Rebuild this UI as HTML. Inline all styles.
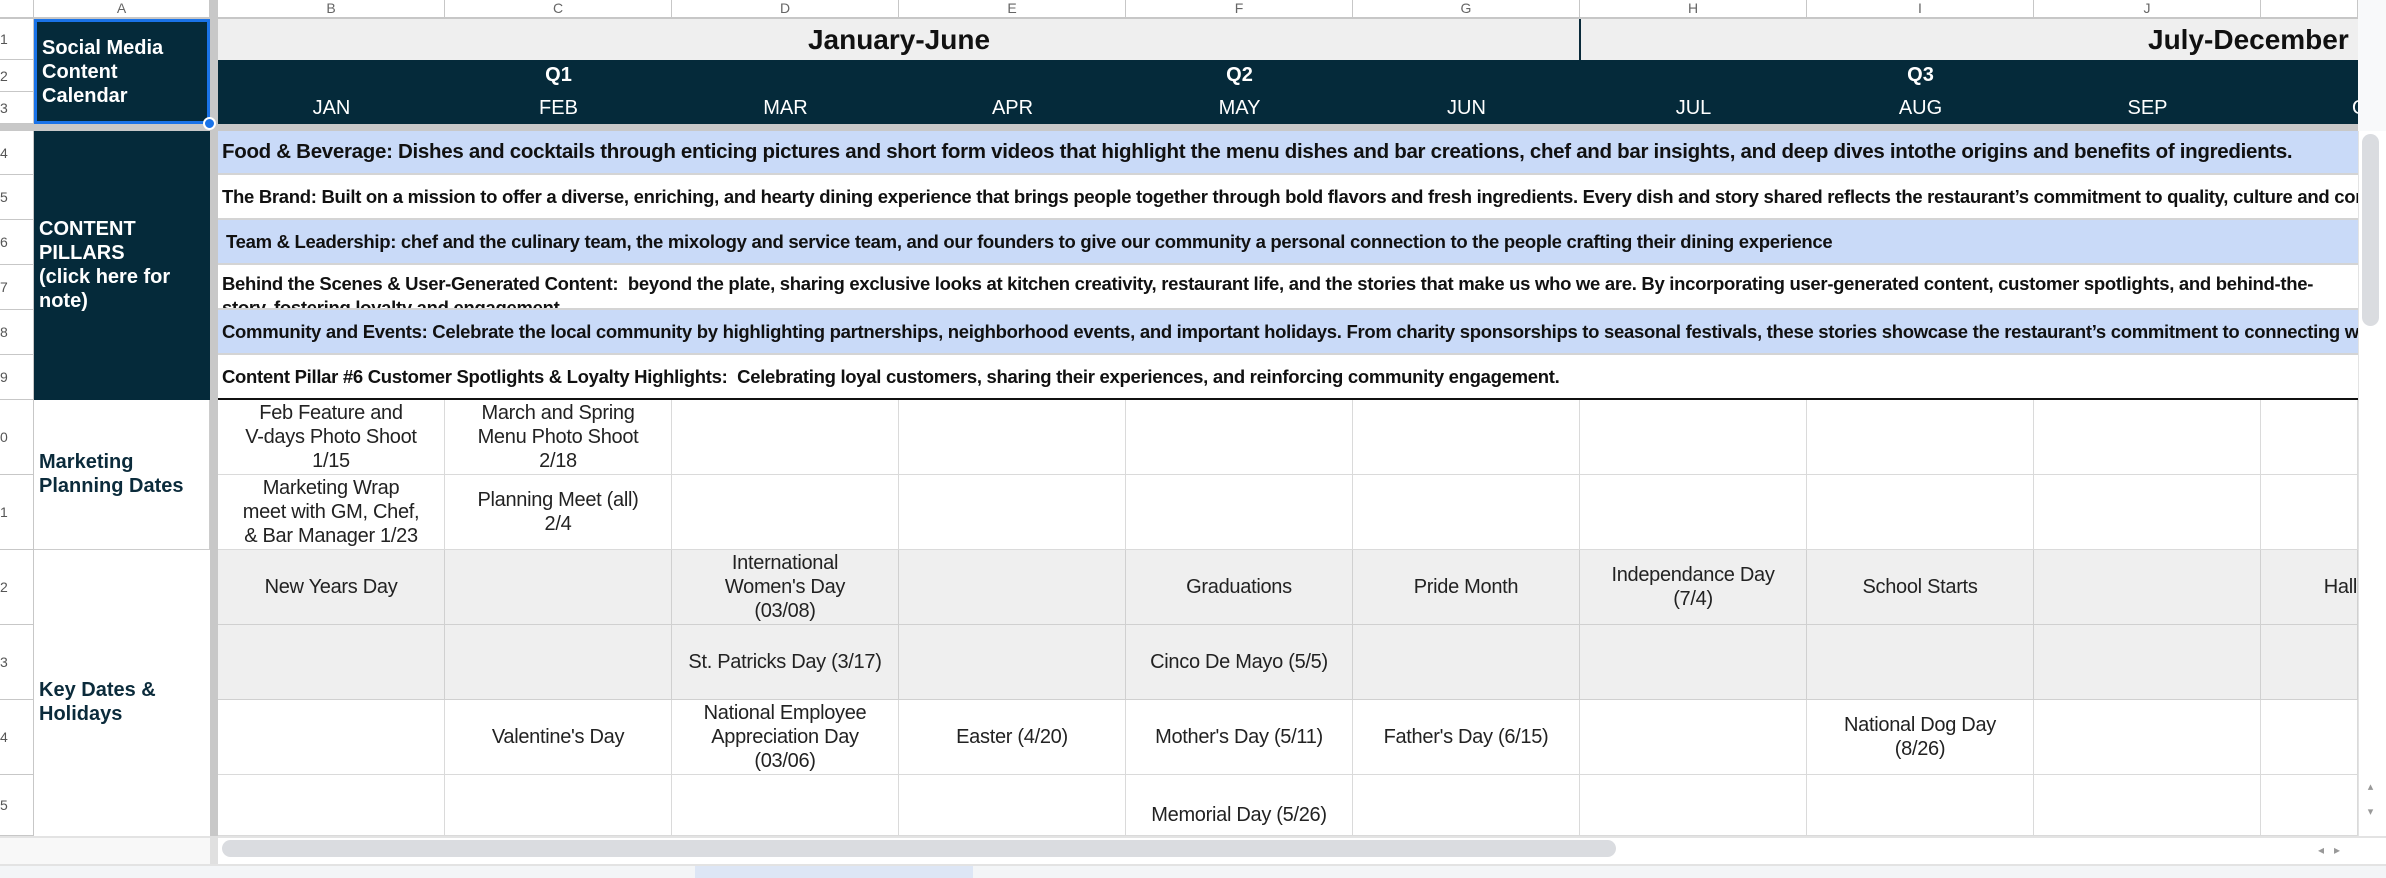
<!DOCTYPE html>
<html><head><meta charset="utf-8"><style>
*{margin:0;padding:0;box-sizing:border-box}
body{width:2386px;height:878px;overflow:hidden;background:#fff;font-family:"Liberation Sans",sans-serif;position:relative;color:#222}
.a{position:absolute}
.hd{position:absolute;top:0;height:19px;border-right:1px solid #c7c7c7;border-bottom:2px solid #c7c7c7;color:#666;font-size:14px;text-align:center;line-height:16px;background:#fff;overflow:hidden}
.rn{position:absolute;left:0;width:34px;border-bottom:1px solid #c7c7c7;border-right:1px solid #c7c7c7;color:#555;font-size:14px;background:#fff;display:flex;align-items:center;padding-left:0}
.c{position:absolute;border-right:1px solid #dadada;border-bottom:1px solid #dadada;display:flex;align-items:center;justify-content:center;text-align:center;font-size:20px;line-height:24px;color:#222;overflow:hidden;white-space:nowrap;letter-spacing:-0.3px}
.g{background:#efefef;border-color:#d0d0d0}
.p{position:absolute;left:218px;width:2140px;font-weight:bold;font-size:18.5px;color:#111;white-space:nowrap;overflow:hidden;padding-left:4px;display:flex;align-items:center;border-bottom:2px solid #d4d4d4;letter-spacing:-0.3px}
.bl{background:#c9daf8}
.m{position:absolute;color:#fff;font-size:20px;text-align:center;width:227px}
</style></head><body>
<div class="hd" style="left:0;width:34px"></div>
<div class="hd" style="left:34px;width:176px">A</div>
<div class="a" style="left:210px;top:0;width:8px;height:836px;background:#c8c8c8"></div>
<div class="hd" style="left:218px;width:227px">B</div>
<div class="hd" style="left:445px;width:227px">C</div>
<div class="hd" style="left:672px;width:227px">D</div>
<div class="hd" style="left:899px;width:227px">E</div>
<div class="hd" style="left:1126px;width:227px">F</div>
<div class="hd" style="left:1353px;width:227px">G</div>
<div class="hd" style="left:1580px;width:227px">H</div>
<div class="hd" style="left:1807px;width:227px">I</div>
<div class="hd" style="left:2034px;width:227px">J</div>
<div class="hd" style="left:2261px;width:97px"></div>
<div class="rn" style="top:19px;height:41px">1</div>
<div class="rn" style="top:60px;height:32px">2</div>
<div class="rn" style="top:92px;height:32px">3</div>
<div class="a" style="left:0;top:124px;width:2358px;height:7px;background:#c8c8c8"></div>
<div class="rn" style="top:131px;height:44px">4</div>
<div class="rn" style="top:175px;height:45px">5</div>
<div class="rn" style="top:220px;height:45px">6</div>
<div class="rn" style="top:265px;height:45px">7</div>
<div class="rn" style="top:310px;height:45px">8</div>
<div class="rn" style="top:355px;height:45px">9</div>
<div class="rn" style="top:400px;height:75px">0</div>
<div class="rn" style="top:475px;height:75px">1</div>
<div class="rn" style="top:550px;height:75px">2</div>
<div class="rn" style="top:625px;height:75px">3</div>
<div class="rn" style="top:700px;height:75px">4</div>
<div class="rn" style="top:775px;height:61px">5</div>

<div class="a" style="left:218px;top:19px;width:2140px;height:41px;background:#efefef"></div>
<div class="a" style="left:1579px;top:19px;width:2px;height:41px;background:#0b2b3b"></div>
<div class="a" style="left:218px;top:24px;width:1362px;text-align:center;font-weight:bold;font-size:28px;color:#111">January-June</div>
<div class="a" style="left:2148px;top:24px;font-weight:bold;font-size:28px;color:#111;white-space:nowrap;width:210px;overflow:hidden">July-December</div>
<div class="a" style="left:218px;top:60px;width:2140px;height:64px;background:#052a3a"></div>
<div class="m" style="left:445px;top:64px;font-weight:bold">Q1</div>
<div class="m" style="left:1126px;top:64px;font-weight:bold">Q2</div>
<div class="m" style="left:1807px;top:64px;font-weight:bold">Q3</div>
<div class="m" style="left:218px;top:97px">JAN</div>
<div class="m" style="left:445px;top:97px">FEB</div>
<div class="m" style="left:672px;top:97px">MAR</div>
<div class="m" style="left:899px;top:97px">APR</div>
<div class="m" style="left:1126px;top:97px">MAY</div>
<div class="m" style="left:1353px;top:97px">JUN</div>
<div class="m" style="left:1580px;top:97px">JUL</div>
<div class="m" style="left:1807px;top:97px">AUG</div>
<div class="m" style="left:2034px;top:97px">SEP</div>
<div class="a" style="left:2352px;top:97px;color:#fff;font-size:20px">O</div>
<div class="a" style="left:34px;top:19px;width:176px;height:105px;background:#052a3a;border:3px solid #1a73e8;color:#fff;font-weight:bold;font-size:20px;line-height:24px;padding:14px 0 0 5px">Social Media<br>Content<br>Calendar</div>
<div class="a" style="left:203px;top:117px;width:13px;height:13px;border-radius:50%;background:#1a73e8;border:2px solid #fff"></div>
<div class="a" style="left:34px;top:131px;width:176px;height:269px;background:#052a3a;color:#fff;font-weight:bold;font-size:20px;line-height:24px;padding:86px 0 0 5px">CONTENT<br>PILLARS<br>(click here for<br>note)</div>
<div class="p bl" style="top:131px;height:44px;font-size:20.5px">Food &amp; Beverage: Dishes and cocktails through enticing pictures and short form videos that highlight the menu dishes and bar creations, chef and bar insights, and deep dives intothe origins and benefits of ingredients.</div>
<div class="p" style="top:175px;height:45px">The Brand: Built on a mission to offer a diverse, enriching, and hearty dining experience that brings people together through bold flavors and fresh ingredients. Every dish and story shared reflects the restaurant’s commitment to quality, culture and community.</div>
<div class="p bl" style="top:220px;height:45px;padding-left:8px">Team &amp; Leadership: chef and the culinary team, the mixology and service team, and our founders to give our community a personal connection to the people crafting their dining experience</div>
<div class="p" style="top:265px;height:45px;align-items:flex-start;padding-top:7px;line-height:24px">Behind the Scenes &amp; User-Generated Content:&nbsp; beyond the plate, sharing exclusive looks at kitchen creativity, restaurant life, and the stories that make us who we are. By incorporating user-generated content, customer spotlights, and behind-the-<br>story, fostering loyalty and engagement.</div>
<div class="p bl" style="top:310px;height:45px">Community and Events: Celebrate the local community by highlighting partnerships, neighborhood events, and important holidays. From charity sponsorships to seasonal festivals, these stories showcase the restaurant’s commitment to connecting with the community.</div>
<div class="p" style="top:355px;height:45px;border-bottom:2px solid #111">Content Pillar #6 Customer Spotlights &amp; Loyalty Highlights:&nbsp; Celebrating loyal customers, sharing their experiences, and reinforcing community engagement.</div>

<div class="a" style="left:34px;top:400px;width:176px;height:150px;border-right:1px solid #ccc;border-bottom:1px solid #ccc;color:#0b2b3b;font-weight:bold;font-size:20px;line-height:24px;padding:50px 0 0 5px">Marketing<br>Planning Dates</div>
<div class="a" style="left:34px;top:550px;width:176px;height:286px;color:#0b2b3b;font-weight:bold;font-size:20px;line-height:24px;padding:128px 0 0 5px">Key Dates &amp;<br>Holidays</div>

<div class="c" style="left:218px;top:400px;width:227px;height:75px">Feb Feature and<br>V-days Photo Shoot<br>1/15</div>
<div class="c" style="left:445px;top:400px;width:227px;height:75px">March and Spring<br>Menu Photo Shoot<br>2/18</div>
<div class="c" style="left:672px;top:400px;width:227px;height:75px"></div>
<div class="c" style="left:899px;top:400px;width:227px;height:75px"></div>
<div class="c" style="left:1126px;top:400px;width:227px;height:75px"></div>
<div class="c" style="left:1353px;top:400px;width:227px;height:75px"></div>
<div class="c" style="left:1580px;top:400px;width:227px;height:75px"></div>
<div class="c" style="left:1807px;top:400px;width:227px;height:75px"></div>
<div class="c" style="left:2034px;top:400px;width:227px;height:75px"></div>
<div class="c" style="left:2261px;top:400px;width:97px;height:75px"></div>
<div class="c" style="left:218px;top:475px;width:227px;height:75px">Marketing Wrap<br>meet with GM, Chef,<br>&amp; Bar Manager 1/23</div>
<div class="c" style="left:445px;top:475px;width:227px;height:75px">Planning Meet (all)<br>2/4</div>
<div class="c" style="left:672px;top:475px;width:227px;height:75px"></div>
<div class="c" style="left:899px;top:475px;width:227px;height:75px"></div>
<div class="c" style="left:1126px;top:475px;width:227px;height:75px"></div>
<div class="c" style="left:1353px;top:475px;width:227px;height:75px"></div>
<div class="c" style="left:1580px;top:475px;width:227px;height:75px"></div>
<div class="c" style="left:1807px;top:475px;width:227px;height:75px"></div>
<div class="c" style="left:2034px;top:475px;width:227px;height:75px"></div>
<div class="c" style="left:2261px;top:475px;width:97px;height:75px"></div>
<div class="c g" style="left:218px;top:550px;width:227px;height:75px">New Years Day</div>
<div class="c g" style="left:445px;top:550px;width:227px;height:75px"></div>
<div class="c g" style="left:672px;top:550px;width:227px;height:75px">International<br>Women's Day<br>(03/08)</div>
<div class="c g" style="left:899px;top:550px;width:227px;height:75px"></div>
<div class="c g" style="left:1126px;top:550px;width:227px;height:75px">Graduations</div>
<div class="c g" style="left:1353px;top:550px;width:227px;height:75px">Pride Month</div>
<div class="c g" style="left:1580px;top:550px;width:227px;height:75px">Independance Day<br>(7/4)</div>
<div class="c g" style="left:1807px;top:550px;width:227px;height:75px">School Starts</div>
<div class="c g" style="left:2034px;top:550px;width:227px;height:75px"></div>
<div class="c g" style="left:2261px;top:550px;width:97px;height:75px;justify-content:flex-end">Hall</div>
<div class="c g" style="left:218px;top:625px;width:227px;height:75px"></div>
<div class="c g" style="left:445px;top:625px;width:227px;height:75px"></div>
<div class="c g" style="left:672px;top:625px;width:227px;height:75px">St. Patricks Day (3/17)</div>
<div class="c g" style="left:899px;top:625px;width:227px;height:75px"></div>
<div class="c g" style="left:1126px;top:625px;width:227px;height:75px">Cinco De Mayo (5/5)</div>
<div class="c g" style="left:1353px;top:625px;width:227px;height:75px"></div>
<div class="c g" style="left:1580px;top:625px;width:227px;height:75px"></div>
<div class="c g" style="left:1807px;top:625px;width:227px;height:75px"></div>
<div class="c g" style="left:2034px;top:625px;width:227px;height:75px"></div>
<div class="c g" style="left:2261px;top:625px;width:97px;height:75px"></div>
<div class="c" style="left:218px;top:700px;width:227px;height:75px"></div>
<div class="c" style="left:445px;top:700px;width:227px;height:75px">Valentine's Day</div>
<div class="c" style="left:672px;top:700px;width:227px;height:75px">National Employee<br>Appreciation Day<br>(03/06)</div>
<div class="c" style="left:899px;top:700px;width:227px;height:75px">Easter (4/20)</div>
<div class="c" style="left:1126px;top:700px;width:227px;height:75px">Mother's Day (5/11)</div>
<div class="c" style="left:1353px;top:700px;width:227px;height:75px">Father's Day (6/15)</div>
<div class="c" style="left:1580px;top:700px;width:227px;height:75px"></div>
<div class="c" style="left:1807px;top:700px;width:227px;height:75px">National Dog Day<br>(8/26)</div>
<div class="c" style="left:2034px;top:700px;width:227px;height:75px"></div>
<div class="c" style="left:2261px;top:700px;width:97px;height:75px"></div>
<div class="c" style="left:218px;top:775px;width:227px;height:61px"></div>
<div class="c" style="left:445px;top:775px;width:227px;height:61px"></div>
<div class="c" style="left:672px;top:775px;width:227px;height:61px"></div>
<div class="c" style="left:899px;top:775px;width:227px;height:61px"></div>
<div class="c" style="left:1126px;top:775px;width:227px;height:61px;align-items:flex-end;padding-bottom:8px">Memorial Day (5/26)</div>
<div class="c" style="left:1353px;top:775px;width:227px;height:61px"></div>
<div class="c" style="left:1580px;top:775px;width:227px;height:61px"></div>
<div class="c" style="left:1807px;top:775px;width:227px;height:61px"></div>
<div class="c" style="left:2034px;top:775px;width:227px;height:61px"></div>
<div class="c" style="left:2261px;top:775px;width:97px;height:61px"></div>

<div class="a" style="left:0;top:836px;width:2386px;height:28px;background:#fff;border-top:2px solid #e3e3e3"></div>
<div class="a" style="left:0;top:838px;width:210px;height:26px;background:#f8f8f8"></div>
<div class="a" style="left:210px;top:836px;width:8px;height:28px;background:#e0e0e0"></div>
<div class="a" style="left:222px;top:840px;width:1394px;height:17px;border-radius:9px;background:#dadce0"></div>
<div class="a" style="left:2300px;top:838px;width:58px;height:24px;color:#999;font-size:12px;text-align:center;line-height:24px">◂ &nbsp; ▸</div>
<div class="a" style="left:0;top:864px;width:2386px;height:2px;background:#e3e3e3"></div>
<div class="a" style="left:0;top:866px;width:2386px;height:12px;background:#f3f5f7"></div>
<div class="a" style="left:695px;top:866px;width:278px;height:12px;background:#dde6f5"></div>
<div class="a" style="left:2358px;top:0;width:28px;height:836px;background:#fff;border-left:1px solid #e3e3e3"></div>
<div class="a" style="left:2358px;top:0;width:28px;height:131px;background:#f8f9fa"></div>
<div class="a" style="left:2362px;top:134px;width:17px;height:192px;border-radius:9px;background:#dadce0"></div>
<div class="a" style="left:2362px;top:775px;width:17px;height:50px;color:#999;font-size:11px;text-align:center;line-height:25px">▴<br>▾</div>
</body></html>
